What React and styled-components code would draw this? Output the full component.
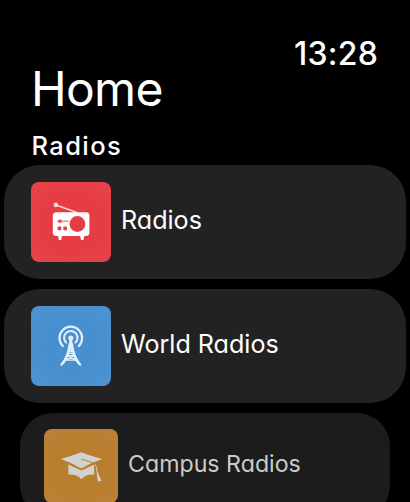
import React from "react";
import styled, { createGlobalStyle } from "styled-components";

const GlobalStyle = createGlobalStyle`
    * {
        box-sizing: border-box;
    }

    body {
        margin: 0;
        background-color: #000;
        overflow: hidden;
    }
`

const Screen = styled.main`
    width: 410px;
    height: 502px;
    overflow: hidden;
    background-color: #000;
    color: #fff;
    font-family: Inter, "Liberation Sans", sans-serif;
`

const Header = styled.header`
    display: flex;
    justify-content: space-between;
    height: 125px;
    padding: 0 32px 0 31px;
`

const Title = styled.h1`
    margin: 64px 0 0;
    font-size: 48px;
    line-height: 50px;
    font-weight: 400;
    letter-spacing: -0.7px;
`

const Clock = styled.time`
    margin-top: 34px;
    font-size: 32px;
    line-height: 40px;
    font-weight: 500;
    letter-spacing: 0.2px;
`

const SectionTitle = styled.h2`
    height: 40px;
    margin: 0;
    padding: 6px 0 0 31.5px;
    font-size: 25.5px;
    line-height: 30px;
    font-weight: 500;
    letter-spacing: 1.4px;
`

const List = styled.div`
    display: flex;
    flex-direction: column;
    align-items: center;
    gap: 10px;
`

const Card = styled.button`
    display: flex;
    flex-shrink: 0;
    align-items: center;
    gap: 10px;
    width: ${(props) => (props.$small ? 370 : 402)}px;
    height: ${(props) => (props.$small ? 105 : 114)}px;
    padding: 0 0 0 ${(props) => (props.$small ? 24 : 27)}px;
    border: none;
    border-radius: ${(props) => (props.$small ? 33 : 36)}px;
    background-color: ${(props) => (props.$small ? "#1c1c1c" : "#222")};
    color: ${(props) => (props.$small ? "#cbcbcb" : "#fff")};
    font-family: inherit;
    font-size: ${(props) => (props.$small ? 23.2 : 25.1)}px;
    text-align: left;
`

const Tile = styled.div`
    width: ${(props) => props.$size}px;
    height: ${(props) => props.$size}px;
    border-radius: 8px;
    overflow: hidden;
    background: radial-gradient(circle, transparent 45%, rgba(255, 255, 255, 0.04)), ${(props) => props.$color};

    svg {
        display: block;
        width: 100%;
        height: 100%;
    }
`

const Label = styled.span`
    padding-bottom: 4px;
    line-height: 32px;
    font-feature-settings: "cv11";
    white-space: nowrap;
`

function RadioIcon() {
  return (
    <svg viewBox="0 0 80 80" fill="#fff">
        <circle cx="24.8" cy="22.9" r="2.3" opacity="0.75"/>
        <path d="M24.8 22.9L46 30.6" stroke="#fff" strokeWidth="1.6" opacity="0.75"/>
        <rect x="21.8" y="30.2" width="36.6" height="23.8" rx="3.5"/>
        <path d="M27 53h4l-.8 5h-2.4zM49 53h4.4l-1 5h-2.4z"/>
        <g fill="#e63c44">
            <circle cx="46.4" cy="42" r="7.9"/>
            <circle cx="29" cy="39.2" r="2" opacity="0.75"/>
            <rect x="26.2" y="38.6" width="11.5" height="1.2" opacity="0.7"/>
            <rect x="26.6" y="44.6" width="3.7" height="3.7" rx="1"/>
            <rect x="32.3" y="44.6" width="3.7" height="3.7" rx="1"/>
        </g>
    </svg>
  );
}

function TowerIcon() {
  return (
    <svg viewBox="0 0 80 80" fill="none" stroke="#e3f0fb" strokeLinecap="round">
        <path d="M31.8 40A11.3 11.3 0 1 1 47.8 40" strokeWidth="2.2"/>
        <path d="M35.1 36.5A6.7 6.7 0 1 1 44.5 36.5" strokeWidth="2"/>
        <circle cx="39.8" cy="32" r="2.5" fill="#e3f0fb" stroke="none"/>
        <path d="M39.8 33v9" strokeWidth="3"/>
        <path d="M38.8 38C37.8 46 35.5 53.5 30.6 58.5M40.8 38C41.8 46 44.1 53.5 49 58.5" strokeWidth="2.5"/>
        <path d="M37.5 44h4.6M36 49.6h7.6M33.8 54.2h12M37.5 44l6 5.6M42.1 44l-6 5.6M36.7 50l8.4 4.2M42.9 50l-8.4 4.2" strokeWidth="1.3"/>
    </svg>
  );
}

function CapIcon() {
  return (
    <svg viewBox="0 0 74 74" fill="#d3d1cf">
        <path d="M24.3 35.6L37.4 41.4L50.2 35.6V45.6Q42 44.7 37.4 50.2Q32.8 44.7 24.3 45.6Z"/>
        <path d="M16.6 30Q27 27.3 37.2 23.3Q47.5 27.3 58.2 30Q47 33.6 37.3 39.4Q27.5 33.6 16.6 30Z"/>
        <path d="M37.5 30.2Q46 32 51.7 35.5L53.4 44" fill="none" stroke="#b97d2e" strokeWidth="1"/>
        <path d="M51.2 34.5Q52.6 36 53.4 42.5L57.5 51.8L53.8 52.4L52.5 42.5Z"/>
    </svg>
  );
}

const stations = [
  { name: "Radios", color: "#e63c44", Icon: RadioIcon },
  { name: "World Radios", color: "#488fcf", Icon: TowerIcon },
  { name: "Campus Radios", color: "#b97d2e", Icon: CapIcon, small: true },
];

function App() {
  return (
    <Screen>
        <GlobalStyle/>
        <Header>
            <Title>Home</Title>
            <Clock>13:28</Clock>
        </Header>
        <SectionTitle>Radios</SectionTitle>
        <List>
            {stations.map(({ name, color, Icon, small }) => (
                <Card key={name} $small={small}>
                    <Tile $color={color} $size={small ? 74 : 80}><Icon/></Tile>
                    <Label>{name}</Label>
                </Card>
            ))}
        </List>
    </Screen>
  );
}

export default App;
